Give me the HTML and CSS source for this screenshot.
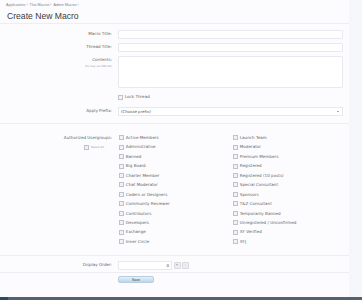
FILE: index.html
```html
<!DOCTYPE html>
<html lang="en">
<head>
    <meta charset="UTF-8">
    <title>Create New Macro</title>
    <link rel="stylesheet" href="styles.css">
</head>
<body>
    <div class="page">
        <div class="content">
            <div class="breadcrumb">Applications &rsaquo; &nbsp;Thai Macros &rsaquo; &nbsp;Admin Macros &rsaquo;</div>
            <h1>Create New Macro</h1>

            <div class="form">
                <div class="row">
                    <label class="label">Macro Title:</label>
                    <div class="control"><input type="text" class="text"></div>
                </div>
                <div class="row">
                    <label class="label">Thread Title:</label>
                    <div class="control"><input type="text" class="text"></div>
                </div>
                <div class="row">
                    <label class="label">Contents:<span class="hint">You may use BBCode</span></label>
                    <div class="control"><textarea class="area"></textarea></div>
                </div>
                <div class="row lock">
                    <div class="label"></div>
                    <div class="control"><span class="check"><span class="box"></span>Lock Thread</span></div>
                </div>
                <div class="row">
                    <label class="label">Apply Prefix:</label>
                    <div class="control"><div class="select">(Choose prefix)<span class="arrow"></span></div></div>
                </div>

                <div class="divider groups-divider"></div>

                <div class="row groups">
                    <div class="label">
                        Authorized Usergroups:
                        <span class="select-all"><span class="box"></span>Select All</span>
                    </div>
                    <div class="control">
                        <ul class="checklist" id="groups"></ul>
                    </div>
                </div>

                <div class="divider order-divider"></div>

                <div class="row">
                    <label class="label">Display Order:</label>
                    <div class="control order">
                        <div class="number">0</div>
                        <span class="spin">+</span><span class="spin">-</span>
                    </div>
                </div>

                <div class="divider save-divider"></div>

                <div class="row">
                    <div class="label"></div>
                    <div class="control"><button class="save">Save</button></div>
                </div>
            </div>
        </div>
        <div class="side"></div>
    </div>
    <div class="footer-bar"><span class="footer-tab"></span></div>

    <script>
        const groups = [
            'Active Members', 'Administrative', 'Banned', 'Big Board', 'Charter Member', 'Chat Moderator',
            'Coders or Designers', 'Community Reviewer', 'Contributors', 'Developers', 'Exchange', 'Inner Circle',
            'Launch Team', 'Moderator', 'Premium Members', 'Registered', 'Registered (10 posts)', 'Special Consultant',
            'Sponsors', 'T&Z Consultant', 'Temporarily Banned', 'Unregistered / Unconfirmed', 'XF Verified', 'XFJ'
        ];
        const list = document.getElementById('groups');
        groups.forEach(name => {
            const li = document.createElement('li');
            li.innerHTML = '<span class="box"></span>' + name.replace('&', '&amp;');
            list.appendChild(li);
        });
    </script>
</body>
</html>
```

FILE: styles.css
```css
body {
    margin: 0;
    background-color: #f3f4f8;
    font-family: "DejaVu Sans", Verdana, sans-serif;
    color: #555;
    height: 300px;
    overflow: hidden;
    position: relative;
}
.page {
    display: flex;
    height: 297px;
}
.content {
    width: 349px;
    background-color: #fcfcfe;
}
.side {
    flex: 1;
    background-color: #f6f7fa;
}
.breadcrumb {
    font-family: "Liberation Sans", Arial, sans-serif;
    font-size: 3.6px;
    line-height: 6px;
    padding: 2px 0 0 6px;
    color: #7a8290;
}
h1 {
    font-family: "Liberation Sans", Arial, sans-serif;
    font-size: 8.6px;
    font-weight: normal;
    color: #3a3a3a;
    margin: 0;
    padding: 2px 0 0 7px;
    line-height: 12px;
    height: 13px;
    border-bottom: 1px solid #ededf2;
    width: 343px;
}
.form {
    padding-top: 6px;
}
.row {
    display: grid;
    grid-template-columns: 112px 225px;
    column-gap: 6px;
    margin-bottom: 4.5px;
}
.label {
    text-align: right;
    font-size: 4.1px;
    line-height: 8.5px;
    color: #666;
}
.control {
    font-size: 4.1px;
    line-height: 0;
}
.hint {
    display: block;
    font-size: 2.6px;
    line-height: 3px;
    color: #a0a0a8;
}
.text {
    display: block;
    box-sizing: border-box;
    width: 225px;
    height: 8.5px;
    border: 1px solid #e8e9ee;
    border-radius: 1px;
    background: #fff;
    padding: 0;
}
.area {
    display: block;
    box-sizing: border-box;
    width: 225px;
    height: 32px;
    border: 1px solid #e8e9ee;
    border-radius: 1px;
    background: #fff;
    resize: none;
    padding: 0;
}
.lock {
    margin-top: 5px;
    margin-bottom: 5px;
}
.check, .select-all, .checklist li {
    display: flex;
    align-items: center;
    font-size: 4.1px;
    line-height: 8.5px;
    color: #666;
}
.box {
    display: inline-block;
    width: 3px;
    height: 3px;
    border: 0.5px solid #c0c2ca;
    background: #f2f2f5;
    margin-right: 1.8px;
}
.select {
    box-sizing: border-box;
    width: 225px;
    height: 9px;
    border: 1px solid #e8e9ee;
    background: #fff;
    font-size: 3.9px;
    line-height: 7px;
    padding-left: 2px;
    color: #555;
    position: relative;
}
.arrow {
    position: absolute;
    right: 3px;
    top: 3px;
    border-left: 1.2px solid transparent;
    border-right: 1.2px solid transparent;
    border-top: 1.8px solid #555;
}
.divider {
    width: 349px;
    border-top: 1px solid #ededf2;
}
.groups-divider {
    margin-top: 7px;
    margin-bottom: 9.5px;
}
.groups .label {
    line-height: 9.5px;
}
.select-all {
    justify-content: flex-end;
    padding-right: 8px;
    font-size: 2.8px;
    color: #999;
    line-height: 9.5px;
}
.checklist {
    list-style: none;
    margin: 0;
    padding: 0 0 0 1px;
    display: grid;
    grid-template-rows: repeat(12, 9.45px);
    grid-auto-flow: column;
    grid-template-columns: 114px 110px;
}
.checklist li {
    line-height: 9.45px;
}
.order-divider {
    margin-top: 9px;
    margin-bottom: 4.5px;
}
.order {
    display: flex;
    align-items: center;
    gap: 1.5px;
}
.number {
    box-sizing: border-box;
    width: 54px;
    height: 9px;
    border: 1px solid #e8e9ee;
    background: #fff;
    font-size: 4px;
    line-height: 7px;
    text-align: right;
    padding-right: 2px;
    color: #444;
}
.spin {
    display: inline-block;
    width: 5px;
    height: 5px;
    border: 0.5px solid #d8d9e0;
    border-radius: 1px;
    background: #eeeef3;
    font-size: 3.5px;
    line-height: 5px;
    text-align: center;
    color: #666;
}
.save-divider {
    margin-top: -2px;
    margin-bottom: 2.5px;
}
.save {
    display: block;
    width: 36px;
    height: 7.5px;
    border: 0.5px solid #b7cde0;
    border-radius: 2px;
    background: linear-gradient(#e6f0f9, #bfd4e8);
    font-family: "Liberation Sans", Arial, sans-serif;
    font-size: 3.5px;
    line-height: 6px;
    color: #344;
    padding: 0;
}
.footer-bar {
    position: absolute;
    left: 0;
    bottom: 0;
    width: 100%;
    height: 3px;
    background: #55626d;
}
.footer-tab {
    display: block;
    width: 8px;
    height: 3px;
    background: #2e4a58;
}
```
